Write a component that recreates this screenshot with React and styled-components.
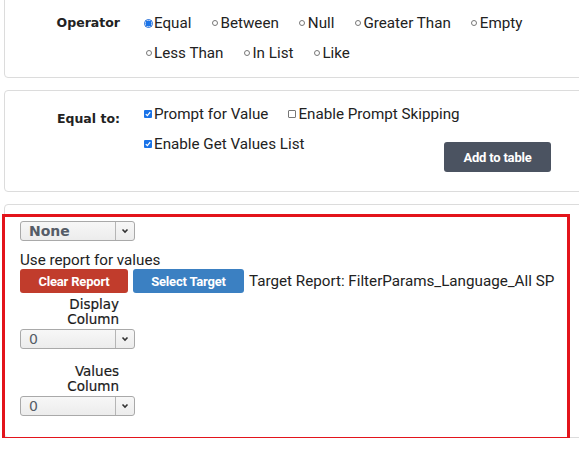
import React from 'react';
import styled, { createGlobalStyle } from 'styled-components';

const GlobalStyle = createGlobalStyle`
    body {
        margin: 0;
        background: #fff;
        overflow: hidden;
        font-family: Roboto, "Liberation Sans", sans-serif;
        color: #222;
    }
`

const Page = styled.div`
    width: 640px;
    padding-left: 4px;
`
const Panel = styled.section`
    border: 1px solid #dcdcdc;
    border-radius: 4px;
    margin-top: ${({top}) => top + 'px'};
    padding: ${({pad}) => pad};
    background: #fff;
`
const FieldGrid = styled.div`
    display: grid;
    grid-template-columns: 115px 1fr;
    column-gap: 24px;
`
const FieldLabel = styled.div`
    font-family: "DejaVu Sans", sans-serif;
    font-weight: 700;
    font-size: 12.5px;
    color: #222;
    text-align: right;
    padding-top: ${({offset}) => offset + 'px'};
`
const Rows = styled.div`
    display: flex;
    flex-direction: column;
`
const Row = styled.div`
    display: flex;
    align-items: flex-start;
    min-height: 30px;
    gap: ${({gap}) => (gap || 19) + 'px'};
`
const Option = styled.label`
    display: inline-flex;
    align-items: center;
    height: 30px;
    font-size: 15.2px;
    color: #222;
    white-space: nowrap;
    width: ${({w}) => (w ? w + 'px' : 'auto')};
`
const RadioMark = styled.span`
    width: 9px;
    height: 9px;
    display: inline-flex;
    align-items: center;
    justify-content: center;
    margin-right: 1px;
    &::before {
        content: '';
        box-sizing: border-box;
        width: ${({on}) => (on ? '9px' : '6px')};
        height: ${({on}) => (on ? '9px' : '6px')};
        border-radius: 50%;
        border: ${({on}) => (on ? '1px solid #1766d6' : '1px solid #777')};
        background: ${({on}) => (on ? 'radial-gradient(circle, #1a73e8 58%, #fff 64%)' : '#fff')};
    }
`
const CheckBox = styled.span`
    box-sizing: border-box;
    width: 8px;
    height: 8px;
    margin-right: 2px;
    border-radius: 1px;
    display: inline-flex;
    align-items: center;
    justify-content: center;
    background: ${({on}) => (on ? '#1a73e8' : '#fff')};
    border: ${({on}) => (on ? 'none' : '1px solid #777')};
`
const DarkButton = styled.button`
    margin-top: 13px;
    width: 107px;
    height: 30px;
    border: none;
    border-radius: 3px;
    background: #4b5361;
    color: #fff;
    font-family: Roboto, sans-serif;
    font-weight: 700;
    font-size: 13px;
    letter-spacing: -0.2px;
`
const Highlight = styled.div`
    box-sizing: border-box;
    width: 568px;
    height: 226px;
    margin: 9px 0 -3px -3px;
    border: 3px solid #e3141b;
    padding: 4px 0 0 15px;
    display: flex;
    flex-direction: column;
    align-items: flex-start;
`
const Select = styled.div`
    box-sizing: border-box;
    width: 115px;
    height: 20px;
    margin-top: ${({top}) => (top || 0) + 'px'};
    border: 1px solid #a9a9a9;
    border-radius: 3px;
    background: linear-gradient(#f7f7f7, #ececec);
    display: flex;
    align-items: stretch;
    font-family: "DejaVu Sans", sans-serif;
    font-size: 14px;
    font-weight: ${({bold}) => (bold ? 700 : 400)};
    color: #555c67;
`
const SelectValue = styled.span`
    flex: 1;
    display: flex;
    align-items: center;
    padding-left: 8px;
`
const SelectArrow = styled.span`
    width: 18px;
    border-left: 1px solid #b5b5b5;
    display: flex;
    align-items: center;
    justify-content: center;
`
const Note = styled.div`
    margin-top: 10px;
    font-size: 15.2px;
    line-height: 18px;
    color: #222;
`
const ButtonRow = styled.div`
    display: flex;
    align-items: center;
    gap: 5px;
`
const ActionButton = styled.button`
    width: ${({w}) => w + 'px'};
    height: 24px;
    border: none;
    border-radius: 3px;
    background: ${({tone}) => tone};
    color: #fff;
    font-family: Roboto, sans-serif;
    font-weight: 700;
    font-size: 13px;
    letter-spacing: -0.2px;
`
const TargetText = styled.span`
    font-size: 15.2px;
    color: #222;
    white-space: nowrap;
`
const ColumnLabel = styled.div`
    width: 99px;
    margin-top: ${({top}) => top + 'px'};
    text-align: right;
    font-family: "DejaVu Sans", sans-serif;
    font-size: 13.5px;
    line-height: 15px;
    color: #1a1a1a;
    -webkit-text-stroke: 0.2px #1a1a1a;
`

const Check = () => (
    <svg width="6" height="6" viewBox="0 0 6 6">
        <path d="M0.8 3.1 L2.4 4.6 L5.2 1.2" fill="none" stroke="#fff" strokeWidth="1.3" />
    </svg>
)

const Chevron = () => (
    <svg width="8" height="6" viewBox="0 0 8 6">
        <path d="M1.5 1.5 L4 4 L6.5 1.5" fill="none" stroke="#333" strokeWidth="1.6" />
    </svg>
)

const Radio = ({ on, children }) => (
    <Option><RadioMark on={on} />{children}</Option>
)

const Checked = ({ on, w, children }) => (
    <Option w={w}><CheckBox on={on}>{on && <Check />}</CheckBox>{children}</Option>
)

const Dropdown = ({ value, bold, top }) => (
    <Select bold={bold} top={top}>
        <SelectValue>{value}</SelectValue>
        <SelectArrow><Chevron /></SelectArrow>
    </Select>
)

export default function App() {
    return (
        <>
            <GlobalStyle />
            <Page>
                <Panel top={-5} pad="12px 0 9px 0">
                    <FieldGrid>
                        <FieldLabel offset={7}>Operator</FieldLabel>
                        <Rows>
                            <Row>
                                <Radio on>Equal</Radio>
                                <Radio>Between</Radio>
                                <Radio>Null</Radio>
                                <Radio>Greater Than</Radio>
                                <Radio>Empty</Radio>
                            </Row>
                            <Row>
                                <Radio>Less Than</Radio>
                                <Radio>In List</Radio>
                                <Radio>Like</Radio>
                            </Row>
                        </Rows>
                    </FieldGrid>
                </Panel>

                <Panel top={12} pad="8px 0 19px 0">
                    <FieldGrid>
                        <FieldLabel offset={12}>Equal to:</FieldLabel>
                        <Rows>
                            <Row gap={20}>
                                <Checked on>Prompt for Value</Checked>
                                <Checked>Enable Prompt Skipping</Checked>
                            </Row>
                            <Row gap={20}>
                                <Checked on w={280}>Enable Get Values List</Checked>
                                <DarkButton>Add to table</DarkButton>
                            </Row>
                        </Rows>
                    </FieldGrid>
                </Panel>

                <Panel top={12} pad="0">
                    <Highlight>
                        <Dropdown value="None" bold />
                        <Note>Use report for values</Note>
                        <ButtonRow>
                            <ActionButton w={108} tone="#c13c2c">Clear Report</ActionButton>
                            <ActionButton w={111} tone="#3b80c2">Select Target</ActionButton>
                            <TargetText>Target Report: FilterParams_Language_All SP</TargetText>
                        </ButtonRow>
                        <ColumnLabel top={4}>Display<br />Column</ColumnLabel>
                        <Dropdown value="0" top={2} />
                        <ColumnLabel top={15}>Values<br />Column</ColumnLabel>
                        <Dropdown value="0" top={2} />
                    </Highlight>
                </Panel>
            </Page>
        </>
    )
}
